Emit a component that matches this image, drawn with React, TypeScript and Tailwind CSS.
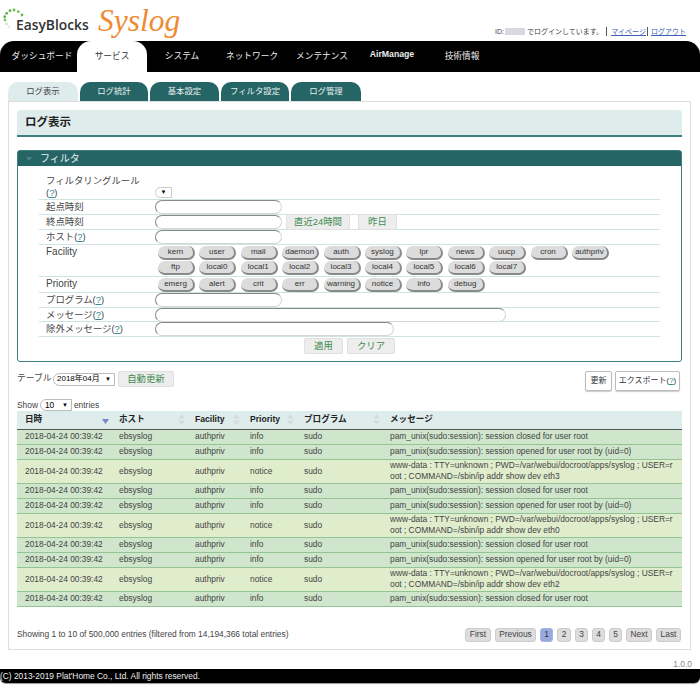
const FONT = "[font-family:'Liberation_Sans','Noto_Sans_CJK_JP',sans-serif]";

const navItems = ["ダッシュボード", "サービス", "システム", "ネットワーク", "メンテナンス", "AirManage", "技術情報"];

const subTabs = [
  { label: "ログ表示", width: "w-[70px]" },
  { label: "ログ統計", width: "w-[68px]" },
  { label: "基本設定", width: "w-[69px]" },
  { label: "フィルタ設定", width: "w-[68px]" },
  { label: "ログ管理", width: "w-[70px]" },
];

const facilities = [
  "kern", "user", "mail", "daemon", "auth", "syslog", "lpr", "news", "uucp", "cron", "authpriv",
  "ftp", "local0", "local1", "local2", "local3", "local4", "local5", "local6", "local7",
];
const priorities = ["emerg", "alert", "crit", "err", "warning", "notice", "info", "debug"];

const closed = "pam_unix(sudo:session): session closed for user root";
const opened = "pam_unix(sudo:session): session opened for user root by (uid=0)";
const www = (eth: string) =>
  `www-data : TTY=unknown ; PWD=/var/webui/docroot/apps/syslog ; USER=root ; COMMAND=/sbin/ip addr show dev ${eth}`;

const rows = [
  { priority: "info", message: closed },
  { priority: "info", message: opened },
  { priority: "notice", message: www("eth3") },
  { priority: "info", message: closed },
  { priority: "info", message: opened },
  { priority: "notice", message: www("eth0") },
  { priority: "info", message: closed },
  { priority: "info", message: opened },
  { priority: "notice", message: www("eth2") },
  { priority: "info", message: closed },
];

const columns = [
  { label: "日時", width: "w-[94px]", active: true },
  { label: "ホスト", width: "w-[76px]" },
  { label: "Facility", width: "w-[55px]" },
  { label: "Priority", width: "w-[54px]" },
  { label: "プログラム", width: "w-[86px]" },
  { label: "メッセージ", width: "w-[300px]" },
];

function Help() {
  return <span className="text-[#2a8a96] underline">?</span>;
}

function Logo() {
  const dots = [
    [9, 27, "#e4efdf"], [6.5, 24, "#cfe6c4"], [5, 20, "#7cc25f"], [4.7, 16.7, "#62b345"], [6.7, 13.3, "#5aae3c"],
    [10, 10.7, "#5aae3c"], [14, 10, "#6cb950"], [18.3, 11.7, "#7cc25f"], [22, 15, "#6cb950"],
  ] as const;
  return (
    <div className="relative h-[41px] w-[92px] shrink-0">
      <svg className="absolute left-0 top-0" width="30" height="30" viewBox="0 0 30 30">
        {dots.map(([cx, cy, fill]) => (
          <circle key={`${cx}-${cy}`} cx={cx} cy={cy} r="1.4" fill={fill} />
        ))}
      </svg>
      <span className="absolute left-[16px] top-[16px] text-[13.8px] font-semibold leading-[18px] text-[#333] [font-family:'Open_Sans',sans-serif]">
        EasyBlocks
      </span>
    </div>
  );
}

function Input({ width }: { width: string }) {
  return (
    <div className={`h-[14px] ${width} rounded-[7px] border border-[#d5d5d5] border-l-[#888] border-t-[#888] bg-white`} />
  );
}

function GreenButton({ label, width }: { label: string; width: string }) {
  return (
    <div className={`flex h-[16px] ${width} items-center justify-center whitespace-nowrap rounded-[2px] border border-[#e0e0e0] bg-[#ededed] text-[9.4px] text-[#3d8b4f]`}>
      {label}
    </div>
  );
}

function Pill({ label }: { label: string }) {
  return (
    <div className="flex h-[14px] w-[37px] items-center justify-center rounded-[7px] border-b-2 border-r-2 border-[#8a8a8a] bg-[#dcdcdc] text-[8px] text-[#333]">
      {label}
    </div>
  );
}

function FilterRow({ label, height, children, align = "items-center" }: { label: React.ReactNode; height: string; children: React.ReactNode; align?: string }) {
  return (
    <div className={`flex ${height} border-b border-[#cfe3e3] pl-[7px]`}>
      <div className={`flex w-[109px] shrink-0 text-[9.4px] leading-[12px] text-[#444] ${align}`}>
        <div>{label}</div>
      </div>
      <div className="flex min-w-0 flex-1 items-center">{children}</div>
    </div>
  );
}

function SortIcon({ active }: { active?: boolean }) {
  if (active) {
    return (
      <svg className="absolute right-[2px] top-[8px]" width="7" height="5" viewBox="0 0 7 5">
        <path d="M0 0h7L3.5 5z" fill="#7b85c4" />
      </svg>
    );
  }
  return (
    <svg className="absolute right-[2px] top-[3px]" width="7" height="11" viewBox="0 0 7 11">
      <path d="M3.5 0L7 4.5H0z M0 6.5h7L3.5 11z" fill="#d3dcdc" />
    </svg>
  );
}

function PageButton({ label, width, active }: { label: string; width: string; active?: boolean }) {
  return (
    <div
      className={`flex h-[14px] ${width} items-center justify-center rounded-[3px] border text-[8.4px] ${
        active ? "border-[#a4b4e0] bg-[#98aade] text-[#333]" : "border-[#cccccc] bg-[#dddddd] text-[#444]"
      }`}
    >
      {label}
    </div>
  );
}

export default function App() {
  return (
    <div className={`h-[698px] w-[700px] overflow-hidden bg-white ${FONT}`}>
      <header className="flex h-[41px] justify-between">
        <div className="flex">
          <Logo />
          <span className="ml-[6px] mt-[4px] text-[31.5px] italic leading-[34px] text-[#f08a33] [font-family:'Liberation_Serif',serif]">
            Syslog
          </span>
        </div>
        <div className="mr-[14px] mt-[26px] flex h-[11px] items-center whitespace-nowrap text-[7px] leading-[11px] text-[#444]">
          <span>ID:</span>
          <span className="mx-[1px] h-[7px] w-[20px] bg-[#d8d8de]" />
          <span className="ml-[1px]">でログインしています。</span>
          <span className="ml-[3px] h-[9px] border-l border-[#555]" />
          <a className="ml-[4px] text-[#3b5fb5] underline">マイページ</a>
          <span className="mx-[1px] h-[9px] border-l border-[#555]" />
          <a className="ml-[2px] text-[#3b5fb5] underline">ログアウト</a>
        </div>
      </header>

      <nav className="flex h-[31px] rounded-t-[14px] bg-black pl-[7px]">
        {navItems.map((item, i) => (
          <div
            key={item}
            className={`flex w-[70px] items-center justify-center text-[8.7px] ${
              i === 1 ? "rounded-t-[14px] bg-white text-[#333]" : "text-[#eeeeee]"
            } ${item === "AirManage" ? "pb-[3px] text-[8.2px] font-bold" : ""}`}
          >
            {item}
          </div>
        ))}
      </nav>

      <div className="mt-[10px] flex h-[19px] gap-[2px] pl-[8px]">
        {subTabs.map((tab, i) => (
          <div
            key={tab.label}
            className={`flex ${tab.width} items-center justify-center rounded-t-[10px] text-[8.4px] ${
              i === 0 ? "bg-[#dfecec] text-[#444]" : "bg-[#266566] text-[#e8f0f0]"
            }`}
          >
            {tab.label}
          </div>
        ))}
      </div>

      <main className="ml-[8px] h-[549px] w-[683px] border border-[#dddddd] px-[8px] pt-[8px]">
        <h1 className="flex h-[27px] items-center rounded-t-[4px] border-b-2 border-[#3d7f7f] bg-[#dfecec] pl-[8px] text-[11.5px] font-bold text-[#222]">
          ログ表示
        </h1>

        <section className="mt-[13px] h-[212px] rounded-[3px] border border-[#3d7f7f]">
          <div className="flex h-[15px] items-center bg-[#266566] pl-[8px] text-[10px] leading-[15px] text-[#e8f0f0]">
            <svg width="6" height="4" viewBox="0 0 6 4">
              <path d="M0 0h6L3 4z" fill="#4c8585" />
            </svg>
            <span className="ml-[8px]">フィルタ</span>
          </div>
          <div className="mx-[21px] pt-[4px]">
            <FilterRow height="h-[30px]" align="items-end" label={<>フィルタリングルール<br />(<Help />)</>}>
              <div className="mt-[16px] flex h-[11px] w-[17px] items-center justify-center rounded-l-[6px] border border-[#cccccc] text-[6px] text-black">▼</div>
            </FilterRow>
            <FilterRow height="h-[15px]" label="起点時刻">
              <Input width="w-[127px]" />
            </FilterRow>
            <FilterRow height="h-[15px]" label="終点時刻">
              <Input width="w-[127px]" />
              <div className="ml-[4px] flex gap-[8px]">
                <GreenButton label="直近24時間" width="w-[64px]" />
                <GreenButton label="昨日" width="w-[39px]" />
              </div>
            </FilterRow>
            <FilterRow height="h-[15px]" label={<>ホスト(<Help />)</>}>
              <Input width="w-[127px]" />
            </FilterRow>
            <FilterRow height="h-[32px]" align="items-start" label={<span className="mt-px block text-[10px]">Facility</span>}>
              <div className="ml-[3px] flex w-[460px] flex-wrap gap-x-[4.4px] gap-y-[1px]">
                {facilities.map((f) => (
                  <Pill key={f} label={f} />
                ))}
              </div>
            </FilterRow>
            <FilterRow height="h-[16px]" align="items-start" label={<span className="mt-px block text-[10px]">Priority</span>}>
              <div className="ml-[3px] flex gap-x-[4.4px]">
                {priorities.map((p) => (
                  <Pill key={p} label={p} />
                ))}
              </div>
            </FilterRow>
            <FilterRow height="h-[15px]" label={<>プログラム(<Help />)</>}>
              <Input width="w-[127px]" />
            </FilterRow>
            <FilterRow height="h-[14px]" label={<>メッセージ(<Help />)</>}>
              <Input width="w-[351px]" />
            </FilterRow>
            <FilterRow height="h-[15px]" label={<>除外メッセージ(<Help />)</>}>
              <Input width="w-[239px]" />
            </FilterRow>
            <div className="mt-[1px] flex gap-[4px] pl-[265px]">
              <GreenButton label="適用" width="w-[39px]" />
              <GreenButton label="クリア" width="w-[48px]" />
            </div>
          </div>
        </section>

        <div className="mt-[9px] flex h-[20px] justify-between">
          <div className="flex h-[16px] items-center text-[8.8px] text-[#444]">
            <span className="w-[36px] shrink-0 whitespace-nowrap">テーブル</span>
            <div className="flex h-[13px] w-[62px] items-center justify-between whitespace-nowrap rounded-l-[7px] border border-[#bbbbbb] pl-[3px] pr-[3px] text-[8px] text-black">
              <span>2018年04月</span>
              <span className="text-[6px]">▼</span>
            </div>
            <div className="ml-[3px]">
              <GreenButton label="自動更新" width="w-[56px]" />
            </div>
          </div>
          <div className="flex gap-[3px] pr-[2px] text-[8px] text-[#333]">
            <div className="flex h-[20px] w-[27px] items-center justify-center rounded-[2px] border border-[#bbbbbb] shadow-[0_1px_1px_#ccc]">更新</div>
            <div className="flex h-[20px] w-[65px] items-center justify-center whitespace-nowrap rounded-[2px] border border-[#bbbbbb] shadow-[0_1px_1px_#ccc]">
              エクスポート(<Help />)
            </div>
          </div>
        </div>

        <div className="mt-[8px] flex h-[12px] items-center text-[8.4px] text-[#444]">
          <span>Show</span>
          <div className="mx-[2px] flex h-[12px] w-[32px] items-center justify-between rounded-l-[7px] border border-[#bbbbbb] pl-[4px] pr-[3px] text-[8.4px] text-black">
            <span>10</span>
            <span className="text-[6px]">▼</span>
          </div>
          <span>entries</span>
        </div>

        <table className="w-[665px] table-fixed border-collapse text-[8.4px] leading-[11px] text-[#444]">
          <thead>
            <tr className="h-[18px] border-b border-[#555] bg-[#dfecec]">
              {columns.map((c, i) => (
                <th key={c.label} className={`relative ${c.width} pl-[8px] text-left text-[8.6px] font-bold text-[#222]`}>
                  {c.label}
                  {i < 5 && <SortIcon active={c.active} />}
                </th>
              ))}
            </tr>
          </thead>
          <tbody>
            {rows.map((row, i) => (
              <tr
                key={i}
                className={`border-b border-[#93c493] ${row.priority === "notice" ? "h-[24px] bg-[#e0edcd]" : "h-[15px] bg-[#cfe6cc]"}`}
              >
                <td className="whitespace-nowrap pl-[8px]">2018-04-24 00:39:42</td>
                <td className="pl-[8px]">ebsyslog</td>
                <td className="pl-[8px]">authpriv</td>
                <td className="pl-[8px]">{row.priority}</td>
                <td className="pl-[8px]">sudo</td>
                <td className="break-all pl-[8px] pr-[5px]">{row.message}</td>
              </tr>
            ))}
          </tbody>
        </table>

        <div className="mt-[21px] flex items-center justify-between pr-[1px] text-[8.4px] text-[#444]">
          <span>Showing 1 to 10 of 500,000 entries (filtered from 14,194,366 total entries)</span>
          <div className="flex gap-[4px]">
            <PageButton label="First" width="w-[26px]" />
            <PageButton label="Previous" width="w-[41px]" />
            <PageButton label="1" width="w-[13px]" active />
            <PageButton label="2" width="w-[14px]" />
            <PageButton label="3" width="w-[13px]" />
            <PageButton label="4" width="w-[13px]" />
            <PageButton label="5" width="w-[13px]" />
            <PageButton label="Next" width="w-[26px]" />
            <PageButton label="Last" width="w-[25px]" />
          </div>
        </div>
      </main>

      <div className="mt-[9px] h-[10px] pr-[8px] text-right text-[8.4px] leading-[10px] text-[#888]">1.0.0</div>
      <footer className="flex h-[14px] items-center rounded-b-[6px] bg-black text-[8.4px] leading-[14px] text-[#eeeeee] shadow-[0_1px_1px_#999]">
        (C) 2013-2019 Plat'Home Co., Ltd. All rights reserved.
      </footer>
    </div>
  );
}
